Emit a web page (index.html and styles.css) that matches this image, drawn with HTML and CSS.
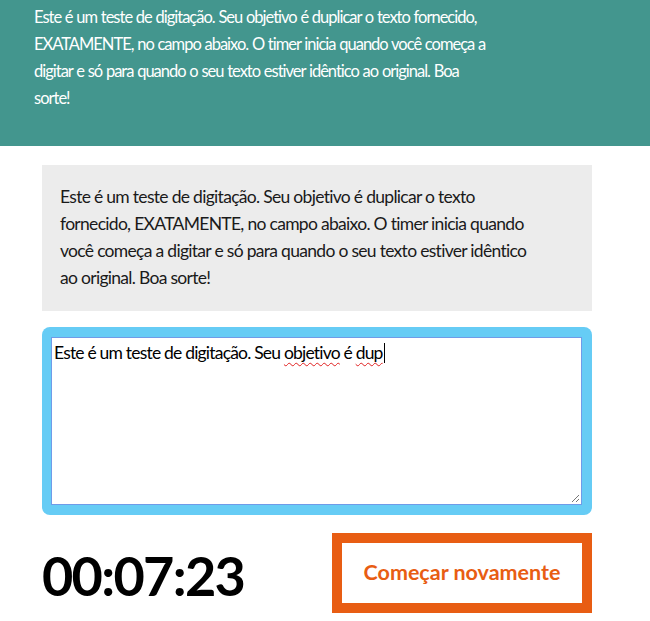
FILE: index.html
```html
<!DOCTYPE html>
<html lang="pt">
<head>
<meta charset="utf-8">
<link rel="stylesheet" href="styles.css">
</head>
<body>
<header class="intro">
  <p class="intro-text">Este é um teste de digitação. Seu objetivo é duplicar o texto fornecido, EXATAMENTE, no campo abaixo. O timer inicia quando você começa a digitar e só para quando o seu texto estiver idêntico ao original. Boa sorte!</p>
</header>
<main class="main">
  <section class="origin">
    <p class="origin-text">Este é um teste de digitação. Seu objetivo é duplicar o texto fornecido, EXATAMENTE, no campo abaixo. O timer inicia quando você começa a digitar e só para quando o seu texto estiver idêntico ao original. Boa sorte!</p>
  </section>
  <div class="test-wrap">
    <div class="test-area" role="textbox">Este é um teste de digitação. Seu <span class="spell">objetivo</span> é <span class="spell">dup</span><span class="caret"></span>
      <svg class="grip" width="10" height="10" viewBox="0 0 10 10"><path d="M9 2 L2 9 M9 6 L6 9" stroke="#777" stroke-width="1" fill="none"/></svg>
    </div>
  </div>
  <div class="meta">
    <div class="timer">00:07:23</div>
    <button class="reset">Começar novamente</button>
  </div>
</main>
</body>
</html>
```

FILE: styles.css
```css
* { box-sizing: border-box; }
html, body { margin: 0; padding: 0; background: #fff; }
body { font-family: "Source Sans Pro", Lato, "Open Sans", sans-serif; color: #111; }

.intro {
  background: #43968e;
  padding: 0 0 0 34px;
  height: 146px;
  overflow: hidden;
}
.intro-text {
  margin: 0;
  width: 460px;
  color: #fff;
  font-size: 16.5px;
  line-height: 27px;
  letter-spacing: -1px;
  word-spacing: 0.5px;
  padding-top: 4px;
}

.main {
  width: 550px;
  margin: 19px 0 0 42px;
}

.origin {
  background: #ececec;
  padding: 18px 18px 20px 18px;
}
.origin-text {
  margin: 0;
  width: 476px;
  font-size: 17.5px;
  line-height: 27px;
  letter-spacing: -0.7px;
  color: #1a1a1a;
}

.test-wrap {
  margin-top: 16px;
  background: #66ccf5;
  border-radius: 8px;
  padding: 10px 10px 10px 9px;
}
.test-area {
  position: relative;
  height: 168px;
  background: #fff;
  border: 1px solid #6f9be8;
  padding: 3px 2px;
  font-size: 17.5px;
  line-height: 24px;
  letter-spacing: -0.8px;
  color: #000;
}
.spell {
  text-decoration: underline wavy #e02020;
  text-decoration-thickness: 1px;
  text-underline-offset: 3px;
}
.caret {
  display: inline-block;
  width: 1px;
  height: 20px;
  margin-left: 1px;
  background: #000;
  vertical-align: -4px;
}
.grip { position: absolute; right: 1px; bottom: 1px; }

.meta {
  margin-top: 18px;
  display: flex;
  justify-content: space-between;
  align-items: center;
}
.timer {
  font-size: 54px;
  font-weight: 700;
  letter-spacing: -1.7px;
  color: #000;
  padding-top: 4px;
}
.reset {
  width: 260px;
  height: 80px;
  background: #fff;
  border: 10px solid #e85d13;
  color: #e85d13;
  font-family: inherit;
  font-size: 21.5px;
  font-weight: 700;
  letter-spacing: 0;
  padding: 0 0 2px 0;
}
```
